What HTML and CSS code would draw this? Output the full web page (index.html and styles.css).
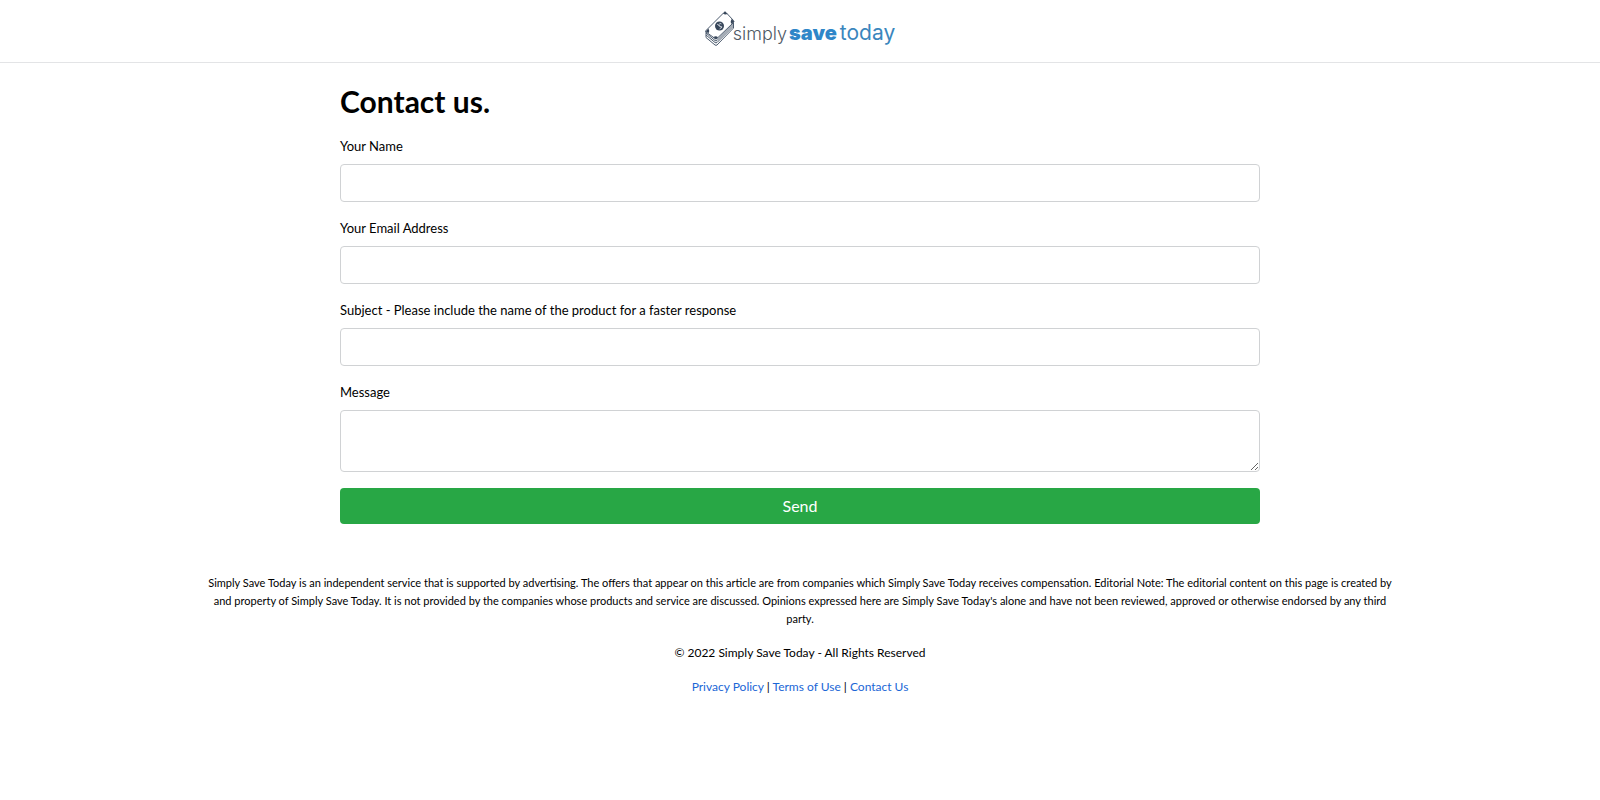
FILE: index.html
```html
<!DOCTYPE html>
<html lang="en">
<head>
<meta charset="utf-8">
<meta name="viewport" content="width=device-width, initial-scale=1">
<title>Contact us - Simply Save Today</title>
<link rel="stylesheet" href="styles.css">
</head>
<body>
<header class="site-header">
  <div class="logo">
    <svg class="logo-mark" viewBox="0 0 30 36" width="30" height="36" aria-hidden="true">
      <g fill="#fff" stroke="#4c5b6e" stroke-width="1" stroke-linejoin="round">
        <path d="M1 20v6.500l9 7.500q1 .7 2 0L28.500 17v-6L11 28z"/>
        <path d="M1 24l9 7.500q1 .7 2 0L28.500 15M1 22l9 7.500q1 .7 2 0L28.500 13" fill="none"/>
        <path d="M1 19.500L19 1.500q1-1 2 0l7.500 8q.8 1 0 2L12 27.500q-1 .8-2 0L1 21q-.6-.8 0-1.500z"/>
      </g>
      <g fill="#37465a">
        <path d="M18 2.500l2-2L22.500 3q-2.500 1.200-4.500-.5z"/>
        <path d="M26.500 8l2.700 2.500-2.700 2.500q-1.500-2.500 0-5z"/>
        <path d="M.8 20.300l2.700-2.800q1.500 2.500 0 4.800z"/>
        <path d="M8.500 26q2.500-1.500 4.500.3l-2 2z"/>
        <circle cx="14.500" cy="15" r="4.500"/>
      </g>
      <path d="M12 13l5 4M16.500 13q-2-1.500-2.500.5t2 2-1.500 2.500" fill="none" stroke="#d5dbe2" stroke-width=".8"/>
    </svg>
    <div class="wordmark"><span class="logo-simply">simply</span><span class="logo-save">save</span><span class="logo-today">today</span></div>
  </div>
</header>
<main class="contact">
  <h1 class="contact-title">Contact us.</h1>
  <form class="contact-form">
    <div class="field">
      <label for="name">Your Name</label>
      <input class="control" type="text" id="name" name="name">
    </div>
    <div class="field">
      <label for="email">Your Email Address</label>
      <input class="control" type="email" id="email" name="email">
    </div>
    <div class="field">
      <label for="subject">Subject - Please include the name of the product for a faster response</label>
      <input class="control" type="text" id="subject" name="subject">
    </div>
    <div class="field">
      <label for="message">Message</label>
      <textarea class="control" id="message" name="message" rows="2"></textarea>
    </div>
    <button class="send" type="submit">Send</button>
  </form>
</main>
<footer class="site-footer">
  <p class="disclosure">Simply Save Today is an independent service that is supported by advertising. The offers that appear on this article are from companies which Simply Save Today receives compensation. Editorial Note: The editorial content on this page is created by and property of Simply Save Today. It is not provided by the companies whose products and service are discussed. Opinions expressed here are Simply Save Today's alone and have not been reviewed, approved or otherwise endorsed by any third party.</p>
  <p>© 2022 Simply Save Today - All Rights Reserved</p>
  <p><a href="#privacy">Privacy Policy</a> | <a href="#terms">Terms of Use</a> | <a href="#contact">Contact Us</a></p>
</footer>
</body>
</html>
```

FILE: styles.css
```css
*, *::before, *::after { box-sizing: border-box; }

body {
  margin: 0;
  background: #fff;
  color: #000;
  font-family: Lato, "Liberation Sans", sans-serif;
  font-size: 13px;
  line-height: 20px;
}

.site-header {
  display: flex;
  justify-content: center;
  padding: 11px 16px 15px;
  border-bottom: 1px solid #e3e4e6;
}

.logo { display: flex; }
.wordmark {
  display: flex;
  align-items: baseline;
  margin-left: -2px;
  padding-top: 9px;
  font-family: Inter, sans-serif;
  line-height: 26px;
}
.logo-simply { color: #4f5965; font-size: 18px; font-weight: 300; }
.logo-save { margin: 0 3px 0 2px; color: #2e86c8; font-size: 20px; font-weight: 900; }
.logo-today { color: #3a86bd; font-size: 21px; font-weight: 400; }

.contact {
  max-width: 952px;
  margin: 0 auto;
  padding: 18px 16px 0;
}

.contact-title {
  margin: 0 0 15px;
  font-size: 30px;
  line-height: 40px;
  font-weight: 700;
}

.contact-form { display: grid; gap: 16px; }

.field { display: grid; gap: 8px; }

.control {
  display: block;
  width: 100%;
  min-height: 38px;
  padding: 6px 12px;
  border: 1px solid #d0d2d4;
  border-radius: 4px;
  background: #fff;
  font: 16px/24px Lato, sans-serif;
}
textarea.control { resize: vertical; }

.send {
  padding: 6px 12px;
  border: 0;
  border-radius: 4px;
  background: #28a745;
  color: #fff;
  font: 16px/24px Lato, sans-serif;
}

.site-footer {
  max-width: 1224px;
  margin: 50px auto 0;
  padding: 0 16px;
  text-align: center;
  font-size: 12px;
  line-height: 18px;
}
.site-footer p { margin: 0 0 16px; }
.site-footer .disclosure { font-size: 11px; }
.site-footer a { color: #1a66d6; text-decoration: none; }
```
